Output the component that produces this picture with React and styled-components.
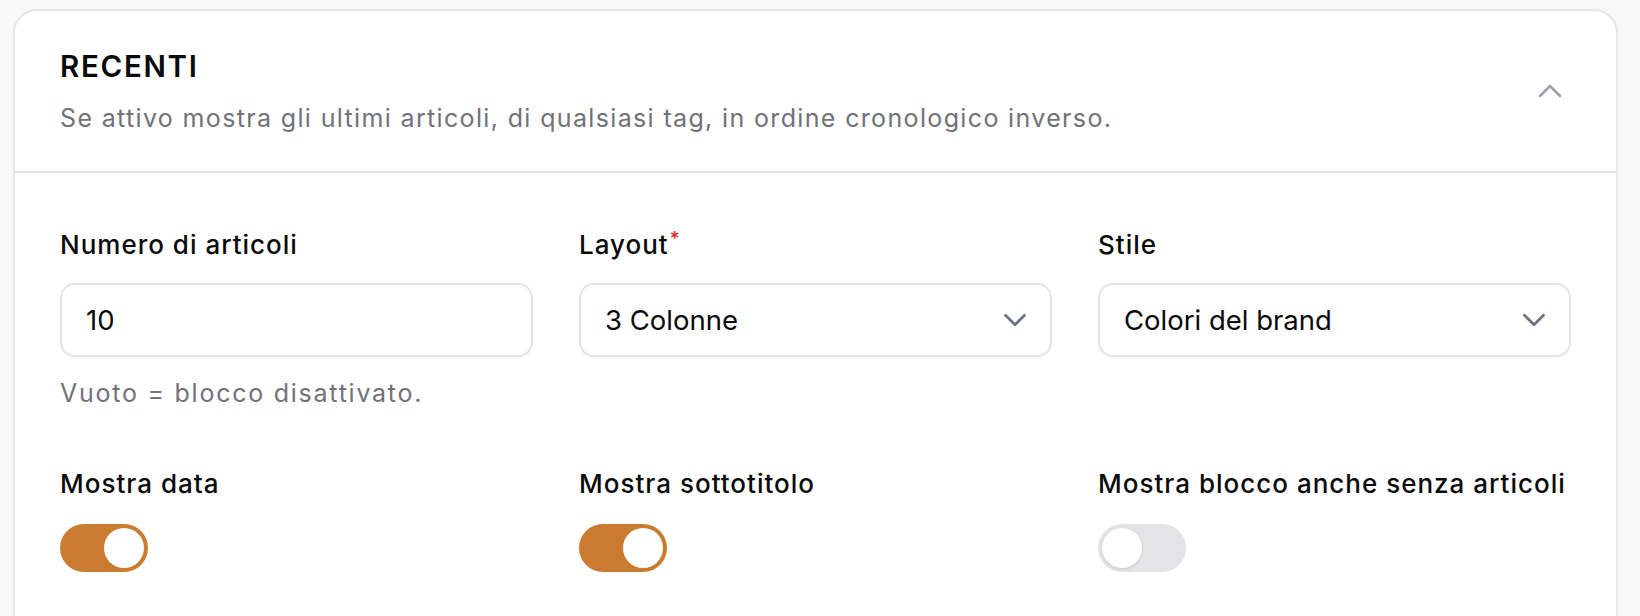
import { ChevronUp, ChevronDown } from "lucide-react";
import styled, { createGlobalStyle } from "styled-components";

const GlobalStyle = createGlobalStyle`
  html, body {
    margin: 0;
    padding: 0;
    overflow: hidden;
    background: #f8f8f8;
  }
  body {
    font-family: Inter, "Noto Sans", sans-serif;
    color: #0a0a0a;
  }
`;

const fields = [
  { label: "Numero di articoli", kind: "input", value: "10", hint: "Vuoto = blocco disattivato." },
  { label: "Layout", kind: "select", value: "3 Colonne", required: true },
  { label: "Stile", kind: "select", value: "Colori del brand" },
];

const toggles = [
  { label: "Mostra data", on: true },
  { label: "Mostra sottotitolo", on: true },
  { label: "Mostra blocco anche senza articoli", on: false },
];

export default function App() {
  return (
    <>
      <GlobalStyle />
      <Card>
        <Header>
          <HeaderText>
            <Title>RECENTI</Title>
            <Subtitle>
              Se attivo mostra gli ultimi articoli, di qualsiasi tag, in ordine cronologico inverso.
            </Subtitle>
          </HeaderText>
          <CollapseButton aria-label="Comprimi">
            <ChevronUp size={40} strokeWidth={1.6} />
          </CollapseButton>
        </Header>
        <Body>
          {fields.map((f) => (
            <Field key={f.label}>
              <Label>
                {f.label}
                {f.required && <Required>*</Required>}
              </Label>
              {f.kind === "input" ? (
                <Control>{f.value}</Control>
              ) : (
                <Control>
                  <span>{f.value}</span>
                  <SelectIcon>
                    <ChevronDown size={38} strokeWidth={1.7} />
                  </SelectIcon>
                </Control>
              )}
              {f.hint && <Hint>{f.hint}</Hint>}
            </Field>
          ))}
          {toggles.map((t) => (
            <Field key={t.label}>
              <Label>{t.label}</Label>
              <Switch $on={t.on}>
                <Knob $on={t.on} />
              </Switch>
            </Field>
          ))}
        </Body>
      </Card>
    </>
  );
}

const Card = styled.section`
  margin: 9px 22px 0 13px;
  background: #fff;
  border: 2px solid #e6e6e6;
  border-radius: 24px;
`;

const Header = styled.header`
  display: flex;
  align-items: center;
  justify-content: space-between;
  padding: 35px 45px 35px;
  border-bottom: 2px solid #e4e4e7;
`;

const HeaderText = styled.div`
  display: flex;
  flex-direction: column;
  gap: 14px;
`;

const Title = styled.h2`
  margin: 0;
  font-size: 29.5px;
  line-height: 40px;
  font-weight: 600;
  letter-spacing: 1.7px;
  color: #0a0a0a;
`;

const Subtitle = styled.p`
  margin: 0;
  font-size: 25px;
  line-height: 36px;
  letter-spacing: 1.35px;
  color: #71717a;
`;

const CollapseButton = styled.button`
  display: flex;
  align-items: center;
  justify-content: center;
  padding: 0;
  margin-right: 1px;
  border: none;
  background: none;
  color: #a1a1aa;
  cursor: pointer;
`;

const Body = styled.div`
  display: grid;
  grid-template-columns: repeat(3, 1fr);
  column-gap: 46px;
  row-gap: 55px;
  padding: 54px 45px 80px;
`;

const Field = styled.div`
  display: flex;
  flex-direction: column;
  align-items: flex-start;
`;

const Label = styled.label`
  position: relative;
  font-size: 26px;
  line-height: 36px;
  font-weight: 500;
  letter-spacing: 1px;
  color: #0a0a0a;
`;

const Required = styled.span`
  position: absolute;
  top: -6px;
  right: -12px;
  font-size: 19px;
  color: #dc2626;
`;

const Control = styled.div`
  box-sizing: border-box;
  width: 100%;
  height: 74px;
  margin-top: 20px;
  padding: 0 16px 0 24px;
  display: flex;
  align-items: center;
  justify-content: space-between;
  border: 2px solid #e4e4e7;
  border-radius: 15px;
  box-shadow: 0 1px 2px rgba(0, 0, 0, 0.04);
  font-size: 27.5px;
  color: #0a0a0a;
  background: #fff;
`;

const SelectIcon = styled.span`
  display: flex;
  color: #6b7280;
`;

const Hint = styled.p`
  margin: 18px 0 0;
  font-size: 25px;
  line-height: 36px;
  letter-spacing: 1.75px;
  color: #71717a;
`;

const Switch = styled.div`
  box-sizing: border-box;
  width: 88px;
  height: 48px;
  margin-top: 22px;
  padding: 4px;
  border-radius: 24px;
  display: flex;
  justify-content: ${({ $on }) => ($on ? "flex-end" : "flex-start")};
  background: ${({ $on }) => ($on ? "#c97b30" : "#e4e4e7")};
`;

const Knob = styled.span`
  width: 40px;
  height: 40px;
  border-radius: 50%;
  background: #fff;
  box-shadow: ${({ $on }) => ($on ? "none" : "0 1px 3px rgba(0, 0, 0, 0.15)")};
`;
